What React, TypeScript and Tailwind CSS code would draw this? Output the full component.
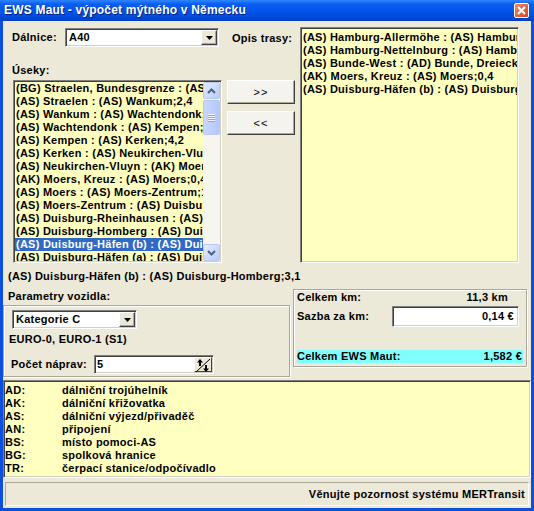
import { useState } from "react";

const useky = [
  "(BG) Straelen, Bundesgrenze : (AS) Straelen;1,2",
  "(AS) Straelen : (AS) Wankum;2,4",
  "(AS) Wankum : (AS) Wachtendonk;3,0",
  "(AS) Wachtendonk : (AS) Kempen;4,9",
  "(AS) Kempen : (AS) Kerken;4,2",
  "(AS) Kerken : (AS) Neukirchen-Vluyn;5,8",
  "(AS) Neukirchen-Vluyn : (AK) Moers, Kreuz;2,1",
  "(AK) Moers, Kreuz : (AS) Moers;0,4",
  "(AS) Moers : (AS) Moers-Zentrum;1,3",
  "(AS) Moers-Zentrum : (AS) Duisburg-Rheinhausen;2,2",
  "(AS) Duisburg-Rheinhausen : (AS) Duisburg-Homberg;2,0",
  "(AS) Duisburg-Homberg : (AS) Duisburg-Häfen (b);3,1",
  "(AS) Duisburg-Häfen (b) : (AS) Duisburg-Homberg;3,1",
  "(AS) Duisburg-Häfen (a) : (AS) Duisburg-Häfen (b);1,0",
];

const trasa = [
  "(AS) Hamburg-Allermöhe : (AS) Hamburg-Billstedt;4,1",
  "(AS) Hamburg-Nettelnburg : (AS) Hamburg-Allermöhe;2,3",
  "(AS) Bunde-West : (AD) Bunde, Dreieck;1,5",
  "(AK) Moers, Kreuz : (AS) Moers;0,4",
  "(AS) Duisburg-Häfen (b) : (AS) Duisburg-Homberg;3,1",
];

const legenda = [
  ["AD:", "dálniční trojúhelník"],
  ["AK:", "dálniční křižovatka"],
  ["AS:", "dálniční výjezd/přivaděč"],
  ["AN:", "připojení"],
  ["BS:", "místo pomoci-AS"],
  ["BG:", "spolková hranice"],
  ["TR:", "čerpací stanice/odpočívadlo"],
];

const sunken =
  "border border-t-[#7f7f7f] border-l-[#7f7f7f] border-b-white border-r-white shadow-[inset_1px_1px_0_#404040,inset_-1px_-1px_0_#d4d0c8]";
const etched = "border border-[#aca899] shadow-[inset_1px_1px_0_#ffffff,1px_1px_0_#ffffff]";

function DropArrow() {
  return (
    <div className="w-[16px] h-full bg-[#ece9d8] border border-t-white border-l-white border-b-[#404040] border-r-[#404040] shadow-[inset_-1px_-1px_0_#aca899] flex items-center justify-center">
      <svg width="7" height="4" viewBox="0 0 7 4">
        <path d="M0 0h7L3.5 4z" fill="#000" />
      </svg>
    </div>
  );
}

function Combo({ value, width }: { value: string; width: string }) {
  return (
    <div className={`${sunken} ${width} h-[19px] bg-white flex items-stretch p-[1px]`}>
      <div className="flex-1 pl-[2px] leading-[15px]">{value}</div>
      <DropArrow />
    </div>
  );
}

function ScrollBar() {
  const btn =
    "h-[17px] w-[17px] rounded-[2px] border border-[#b9c9ef] bg-[linear-gradient(135deg,#e4ecfe,#b8cdfb)] flex items-center justify-center";
  return (
    <div className="w-[17px] h-full bg-[#f6f5f0] flex flex-col">
      <div className={btn}>
        <svg width="9" height="6" viewBox="0 0 9 6">
          <path d="M1 5l3.5-3.5L8 5" stroke="#4d6185" strokeWidth="2" fill="none" />
        </svg>
      </div>
      <div className="mt-[1px] h-[35px] w-[17px] rounded-[2px] border border-[#b9c9ef] bg-[linear-gradient(90deg,#c8d7fd,#b3c8f9)] flex flex-col items-center justify-center gap-[1px]">
        {[0, 1, 2, 3].map((i) => (
          <div key={i} className="w-[7px] h-[1px] bg-[#eef3ff] shadow-[0_1px_0_#8aa6ea]" />
        ))}
      </div>
      <div className="flex-1" />
      <div className={btn}>
        <svg width="9" height="6" viewBox="0 0 9 6">
          <path d="M1 1l3.5 3.5L8 1" stroke="#4d6185" strokeWidth="2" fill="none" />
        </svg>
      </div>
    </div>
  );
}

function Button({ label }: { label: string }) {
  return (
    <button className="w-[68px] h-[24px] bg-[#f4f3ee] border border-t-white border-l-white border-b-[#404040] border-r-[#404040] shadow-[inset_-1px_-1px_0_#aca899] font-normal text-[11px] tracking-[1px]">
      {label}
    </button>
  );
}

export default function App() {
  const [selected, setSelected] = useState(12);

  return (
    <div className="w-[534px] h-[511px] bg-[#0b4fdc] flex flex-col font-['Liberation_Sans',Arial,sans-serif] text-[11px] font-bold text-black leading-[13px] tracking-[0.25px] overflow-hidden">
      {/* titulek okna */}
      <div className="h-[21px] shrink-0 flex items-center justify-between pl-[4px] pr-[5px] bg-[linear-gradient(to_bottom,#2f86ff_0%,#0a5df0_20%,#0054e8_55%,#0049d8_85%,#003dc0_100%)]">
        <span className="text-white text-[12px] tracking-[0.2px] [text-shadow:1px_1px_0_#0a1f80]">
          EWS Maut - výpočet mýtného v Německu
        </span>
        <div className="w-[15px] h-[15px] rounded-[2px] border border-white bg-[linear-gradient(135deg,#f08a6c,#d9451c)] flex items-center justify-center">
          <svg width="9" height="9" viewBox="0 0 9 9">
            <path d="M1 1l7 7M8 1L1 8" stroke="#fff" strokeWidth="2" />
          </svg>
        </div>
      </div>

      <div className="mx-[3px] mb-[3px] flex-1 bg-[#ece9d8] flex flex-col">
        {/* horni cast */}
        <div className="flex h-[242px]">
          <div className="ml-[9px] w-[210px] flex flex-col">
            <div className="mt-[7px] h-[19px] flex items-center">
              <span className="w-[53px]">Dálnice:</span>
              <Combo value="A40" width="w-[154px]" />
            </div>
            <div className="mt-[17px] h-[13px]">Úseky:</div>
            <div className={`${sunken} mt-[3px] ml-[1px] w-[209px] h-[183px] bg-[#ffffc0] flex p-[1px]`}>
              <div className="flex-1 overflow-hidden">
                {useky.map((u, i) => (
                  <div
                    key={u}
                    onClick={() => setSelected(i)}
                    className={`h-[13px] pl-[1px] whitespace-nowrap overflow-hidden ${
                      i === selected ? "bg-[#316ac5] text-white" : ""
                    }`}
                  >
                    {u}
                  </div>
                ))}
              </div>
              <ScrollBar />
            </div>
          </div>

          <div className="ml-[5px] w-[68px] flex flex-col">
            <div className="mt-[11px] h-[13px] pl-[5px] whitespace-nowrap">Opis trasy:</div>
            <div className="mt-[35px] flex flex-col gap-[7px]">
              <Button label=">>" />
              <Button label="<<" />
            </div>
          </div>

          <div className={`${sunken} ml-[5px] mt-[6px] w-[219px] h-[236px] bg-[#ffffc0] p-[1px] pt-[3px] overflow-hidden`}>
            {trasa.map((t) => (
              <div key={t} className="h-[13px] pl-[1px] whitespace-nowrap overflow-hidden">
                {t}
              </div>
            ))}
          </div>
        </div>

        <div className="mt-[7px] h-[13px] pl-[5px] whitespace-nowrap">{useky[selected]}</div>

        {/* parametry */}
        <div className="flex mt-[3px]">
          <div className="w-[287px] flex flex-col">
            <div className="mt-[4px] h-[13px] pl-[5px]">Parametry vozidla:</div>
            <div className={`${etched} mt-[2px] h-[72px] flex flex-col pl-[8px] pt-[4px]`}>
              <Combo value="Kategorie C" width="w-[125px]" />
              <div className="mt-[4px] h-[13px] -ml-[3px]">EURO-0, EURO-1 (S1)</div>
              <div className="mt-[9px] flex items-center -ml-[1px]">
                <span className="w-[83px]">Počet náprav:</span>
                <div className={`${sunken} w-[120px] h-[19px] bg-white flex p-[1px]`}>
                  <div className="flex-1 pl-[1px] leading-[15px]">5</div>
                  <div className="w-[18px] h-full bg-[#ece9d8] border border-t-white border-l-white border-b-[#404040] border-r-[#404040]">
                    <svg width="16" height="15" viewBox="0 0 16 15">
                      <path d="M1 14L15 1" stroke="#000" strokeWidth="1" />
                      <path d="M5 1L2 4.5h2V8h2V4.5h2z" fill="#000" />
                      <path d="M11 14l3-3.5h-2V7h-2v3.5H8z" fill="#000" />
                    </svg>
                  </div>
                </div>
              </div>
            </div>
          </div>

          <div className={`${etched} ml-[3px] mt-[3px] w-[234px] h-[78px] flex flex-col px-[3px]`}>
            <div className="mt-[1px] h-[13px] flex justify-between pr-[15px]">
              <span>Celkem km:</span>
              <span>11,3 km</span>
            </div>
            <div className="mt-[2px] h-[21px] flex items-center">
              <span className="w-[95px]">Sazba za km:</span>
              <div className={`${sunken} w-[127px] h-[21px] bg-white flex items-center justify-end pr-[4px]`}>
                0,14 €
              </div>
            </div>
            <div className="mt-[23px] h-[13px] bg-[#80ffff] flex justify-between pr-[1px]">
              <span>Celkem EWS Maut:</span>
              <span>1,582 €</span>
            </div>
          </div>
        </div>

        {/* legenda */}
        <div className={`${sunken} mt-[3px] h-[98px] bg-[#ffffc0] pt-[3px] pl-[1px]`}>
          {legenda.map(([k, v]) => (
            <div key={k} className="h-[13px] flex">
              <span className="w-[57px]">{k}</span>
              <span>{v}</span>
            </div>
          ))}
        </div>

        {/* stavovy radek */}
        <div className="flex-1 flex pt-[4px] pb-[2px] px-[2px]">
          <div className="flex-1 border border-t-[#aca899] border-l-[#aca899] border-b-white border-r-white flex items-center justify-end pr-[3px]">
            Věnujte pozornost systému MERTransit
          </div>
        </div>
      </div>
    </div>
  );
}
